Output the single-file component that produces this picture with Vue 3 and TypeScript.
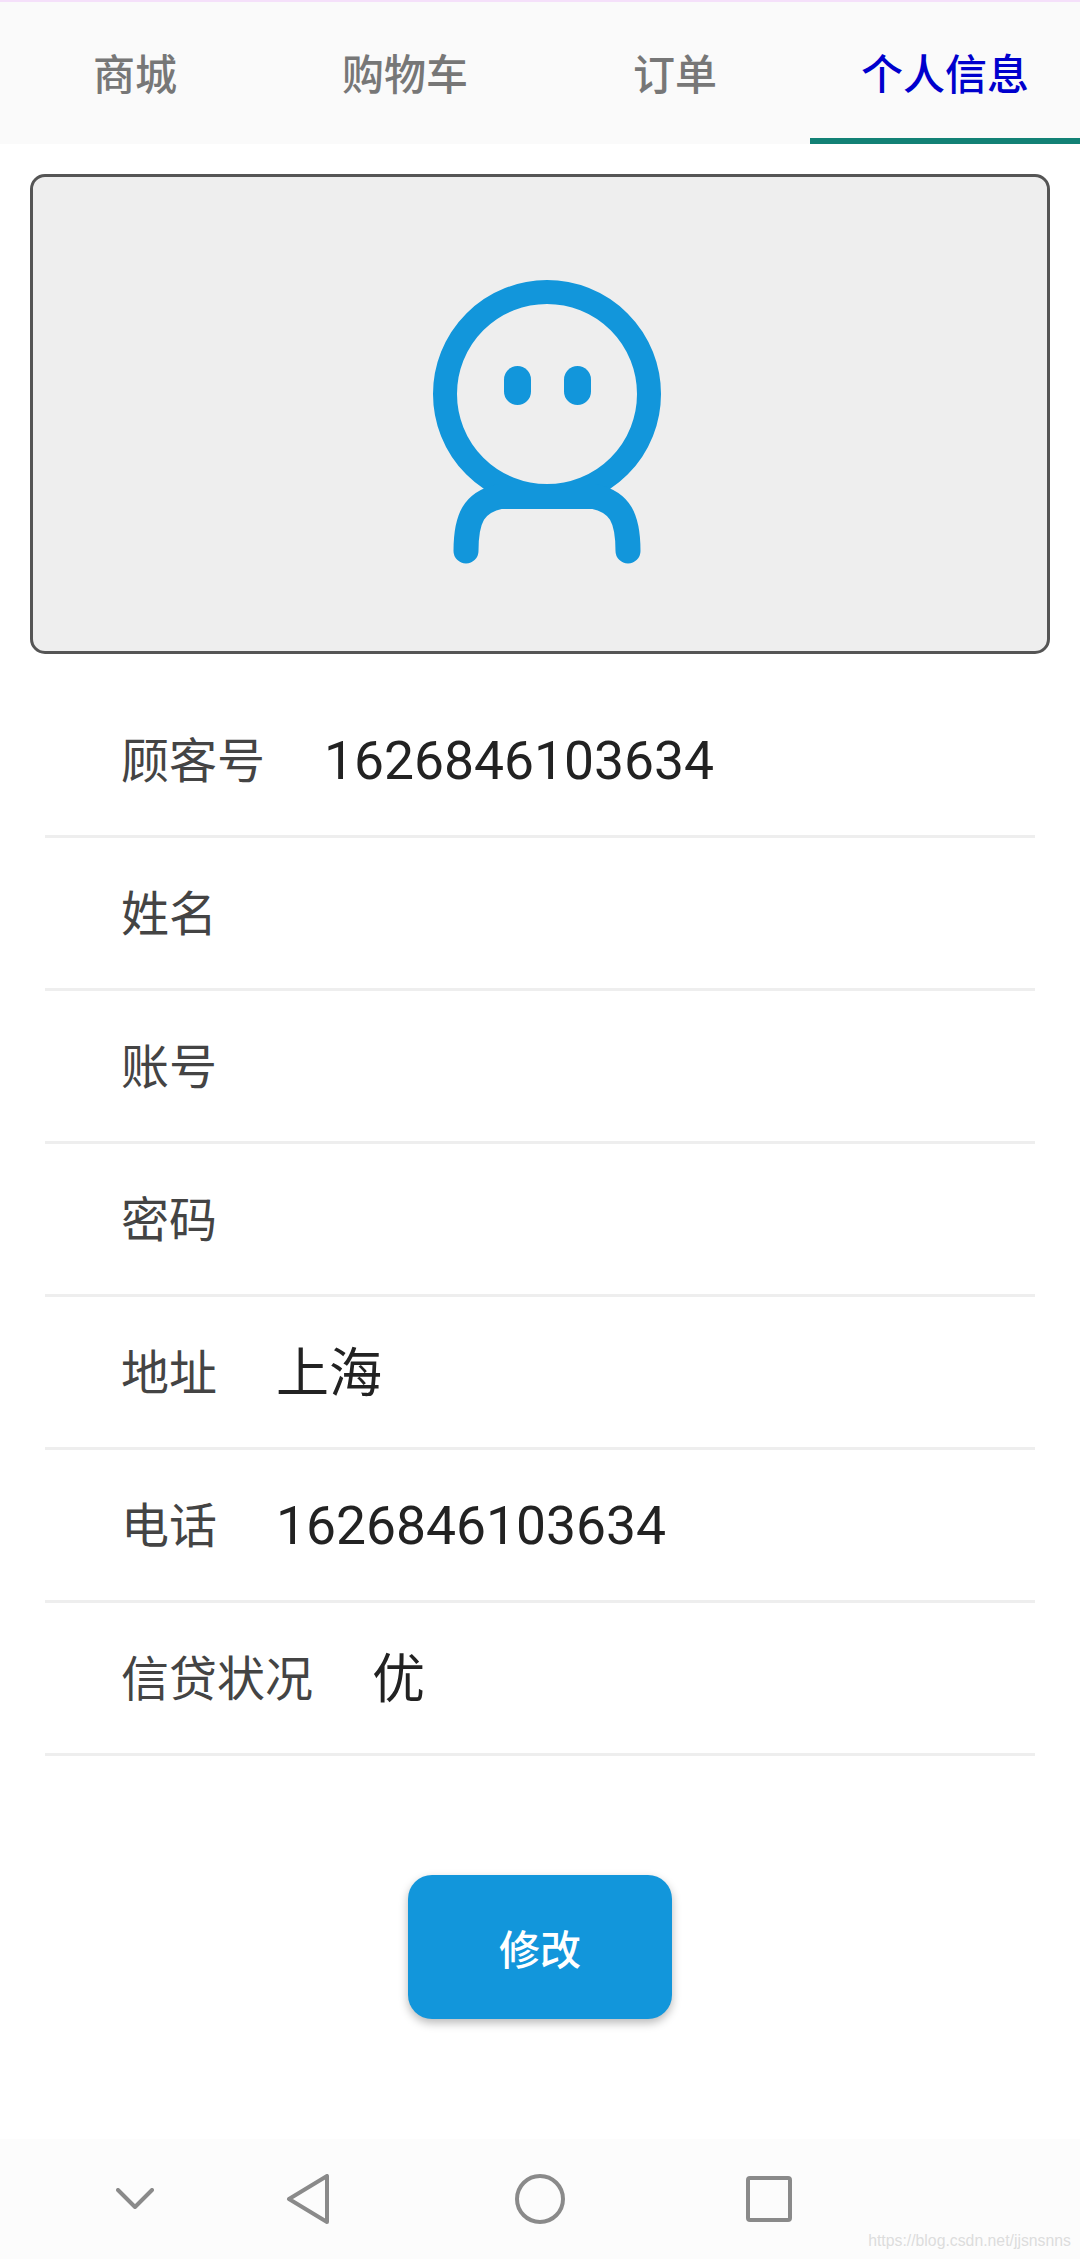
<script setup lang="ts">
interface Row { label: string; value: string; cjk?: boolean }
const tabs: string[] = ['商城', '购物车', '订单', '个人信息']
const activeTab = '个人信息'
const rows: Row[] = [
  { label: '顾客号', value: '1626846103634' },
  { label: '姓名', value: '' },
  { label: '账号', value: '' },
  { label: '密码', value: '' },
  { label: '地址', value: '上海', cjk: true },
  { label: '电话', value: '1626846103634' },
  { label: '信贷状况', value: '优', cjk: true },
]
</script>

<template>
  <div class="page">
    <div class="tabs">
      <div v-for="t in tabs" :key="t" class="tab" :class="{ active: t === activeTab }">{{ t }}</div>
    </div>

    <div class="avatar-card">
      <svg class="avatar" viewBox="405 264 270 300" fill="none" stroke="#1296db" stroke-linecap="round">
        <circle cx="547" cy="394" r="102" stroke-width="24" />
        <path stroke-width="25" d="M466 551 C466 518 474 502 500 496.5 L594 496.5 C620 502 628 518 628 551" />
        <rect x="504" y="366" width="27" height="39" rx="13.5" fill="#1296db" stroke="none" />
        <rect x="564" y="366" width="27" height="39" rx="13.5" fill="#1296db" stroke="none" />
      </svg>
    </div>

    <div class="list">
      <div v-for="r in rows" :key="r.label" class="row">
        <span class="label">{{ r.label }}</span>
        <span v-if="r.value" class="value" :class="{ cjk: r.cjk }">{{ r.value }}</span>
      </div>
    </div>

    <div class="action">
      <button class="btn" type="button">修改</button>
    </div>

    <div class="nav">
      <svg class="nav-icon chevron" viewBox="0 0 38 21" fill="none" stroke="#8a8a8a" stroke-width="4" stroke-linecap="round" stroke-linejoin="round">
        <path d="M2 2 L19 19 L36 2" />
      </svg>
      <svg class="nav-icon back" viewBox="0 0 44 50" fill="none" stroke="#8a8a8a" stroke-width="4" stroke-linejoin="round">
        <path d="M41 2 L41 48 L3 25 Z" />
      </svg>
      <svg class="nav-icon home" viewBox="0 0 50 50" fill="none" stroke="#8a8a8a" stroke-width="4">
        <circle cx="25" cy="25" r="23" />
      </svg>
      <svg class="nav-icon recent" viewBox="0 0 46 46" fill="none" stroke="#8a8a8a" stroke-width="4" stroke-linejoin="round">
        <rect x="2" y="2" width="42" height="42" rx="2" />
      </svg>
      <span class="watermark">https://blog.csdn.net/jjsnsnns</span>
    </div>
  </div>
</template>

<style>
html, body { margin: 0; background: #fff; }
</style>

<style scoped>
.page {
  position: relative;
  width: 1080px;
  height: 2259px;
  display: flex;
  flex-direction: column;
  background: #fff;
  font-family: "Noto Sans CJK SC", Roboto, sans-serif;
  overflow: hidden;
}
.tabs {
  display: grid;
  grid-template-columns: repeat(4, 270px);
  height: 142px;
  background: #fafafa;
  border-top: 2px solid #f5e0fa;
}
.tab {
  display: flex;
  align-items: center;
  justify-content: center;
  font-size: 42px;
  font-weight: 500;
  color: #777;
  box-sizing: border-box;
  padding-top: 2px;
  border-bottom: 6px solid transparent;
}
.tab.active {
  color: #0000cd;
  border-bottom-color: #128175;
}
.avatar-card {
  margin: 30px 30px 0;
  height: 480px;
  box-sizing: border-box;
  border: 3px solid #555;
  border-radius: 15px;
  background: #eee;
  display: flex;
  align-items: center;
  justify-content: center;
}
.avatar { width: 270px; height: 300px; display: block; filter: blur(0.6px); }
.list {
  margin: 31px 45px 0;
  display: flex;
  flex-direction: column;
}
.row {
  height: 153px;
  box-sizing: border-box;
  border-bottom: 3px solid #eee;
  padding-left: 76px;
  display: flex;
  align-items: center;
  gap: 59px;
}
.label { font-size: 48px; line-height: 1; color: #444; padding-bottom: 6px; }
.value {
  font-family: Roboto, "Noto Sans CJK SC", sans-serif;
  font-size: 53.4px;
  line-height: 1;
  color: #222;
  padding-top: 2px;
}
.value.cjk {
  font-family: "Noto Sans CJK SC", sans-serif;
  font-size: 53px;
  padding-top: 0;
  padding-bottom: 6px;
}
.action {
  display: flex;
  justify-content: center;
  margin-top: 119px;
}
.btn {
  width: 264px;
  height: 144px;
  border: 0;
  border-radius: 24px;
  background: #1296db;
  color: #fff;
  font-family: inherit;
  font-size: 41px;
  font-weight: 500;
  box-shadow: 0 4px 10px rgba(0, 0, 0, 0.28);
}
.nav {
  position: relative;
  margin-top: auto;
  height: 120px;
  background: #fcfcfc;
}
.nav-icon { position: absolute; display: block; }
.chevron { left: 116px; top: 49px; width: 38px; height: 21px; }
.back { left: 286px; top: 35px; width: 44px; height: 50px; }
.home { left: 515px; top: 35px; width: 50px; height: 50px; }
.recent { left: 746px; top: 37px; width: 46px; height: 46px; }
.watermark {
  position: absolute;
  right: 9px;
  bottom: 9px;
  font-family: "Liberation Sans", sans-serif;
  font-size: 15.8px;
  color: #ddd;
}
</style>
